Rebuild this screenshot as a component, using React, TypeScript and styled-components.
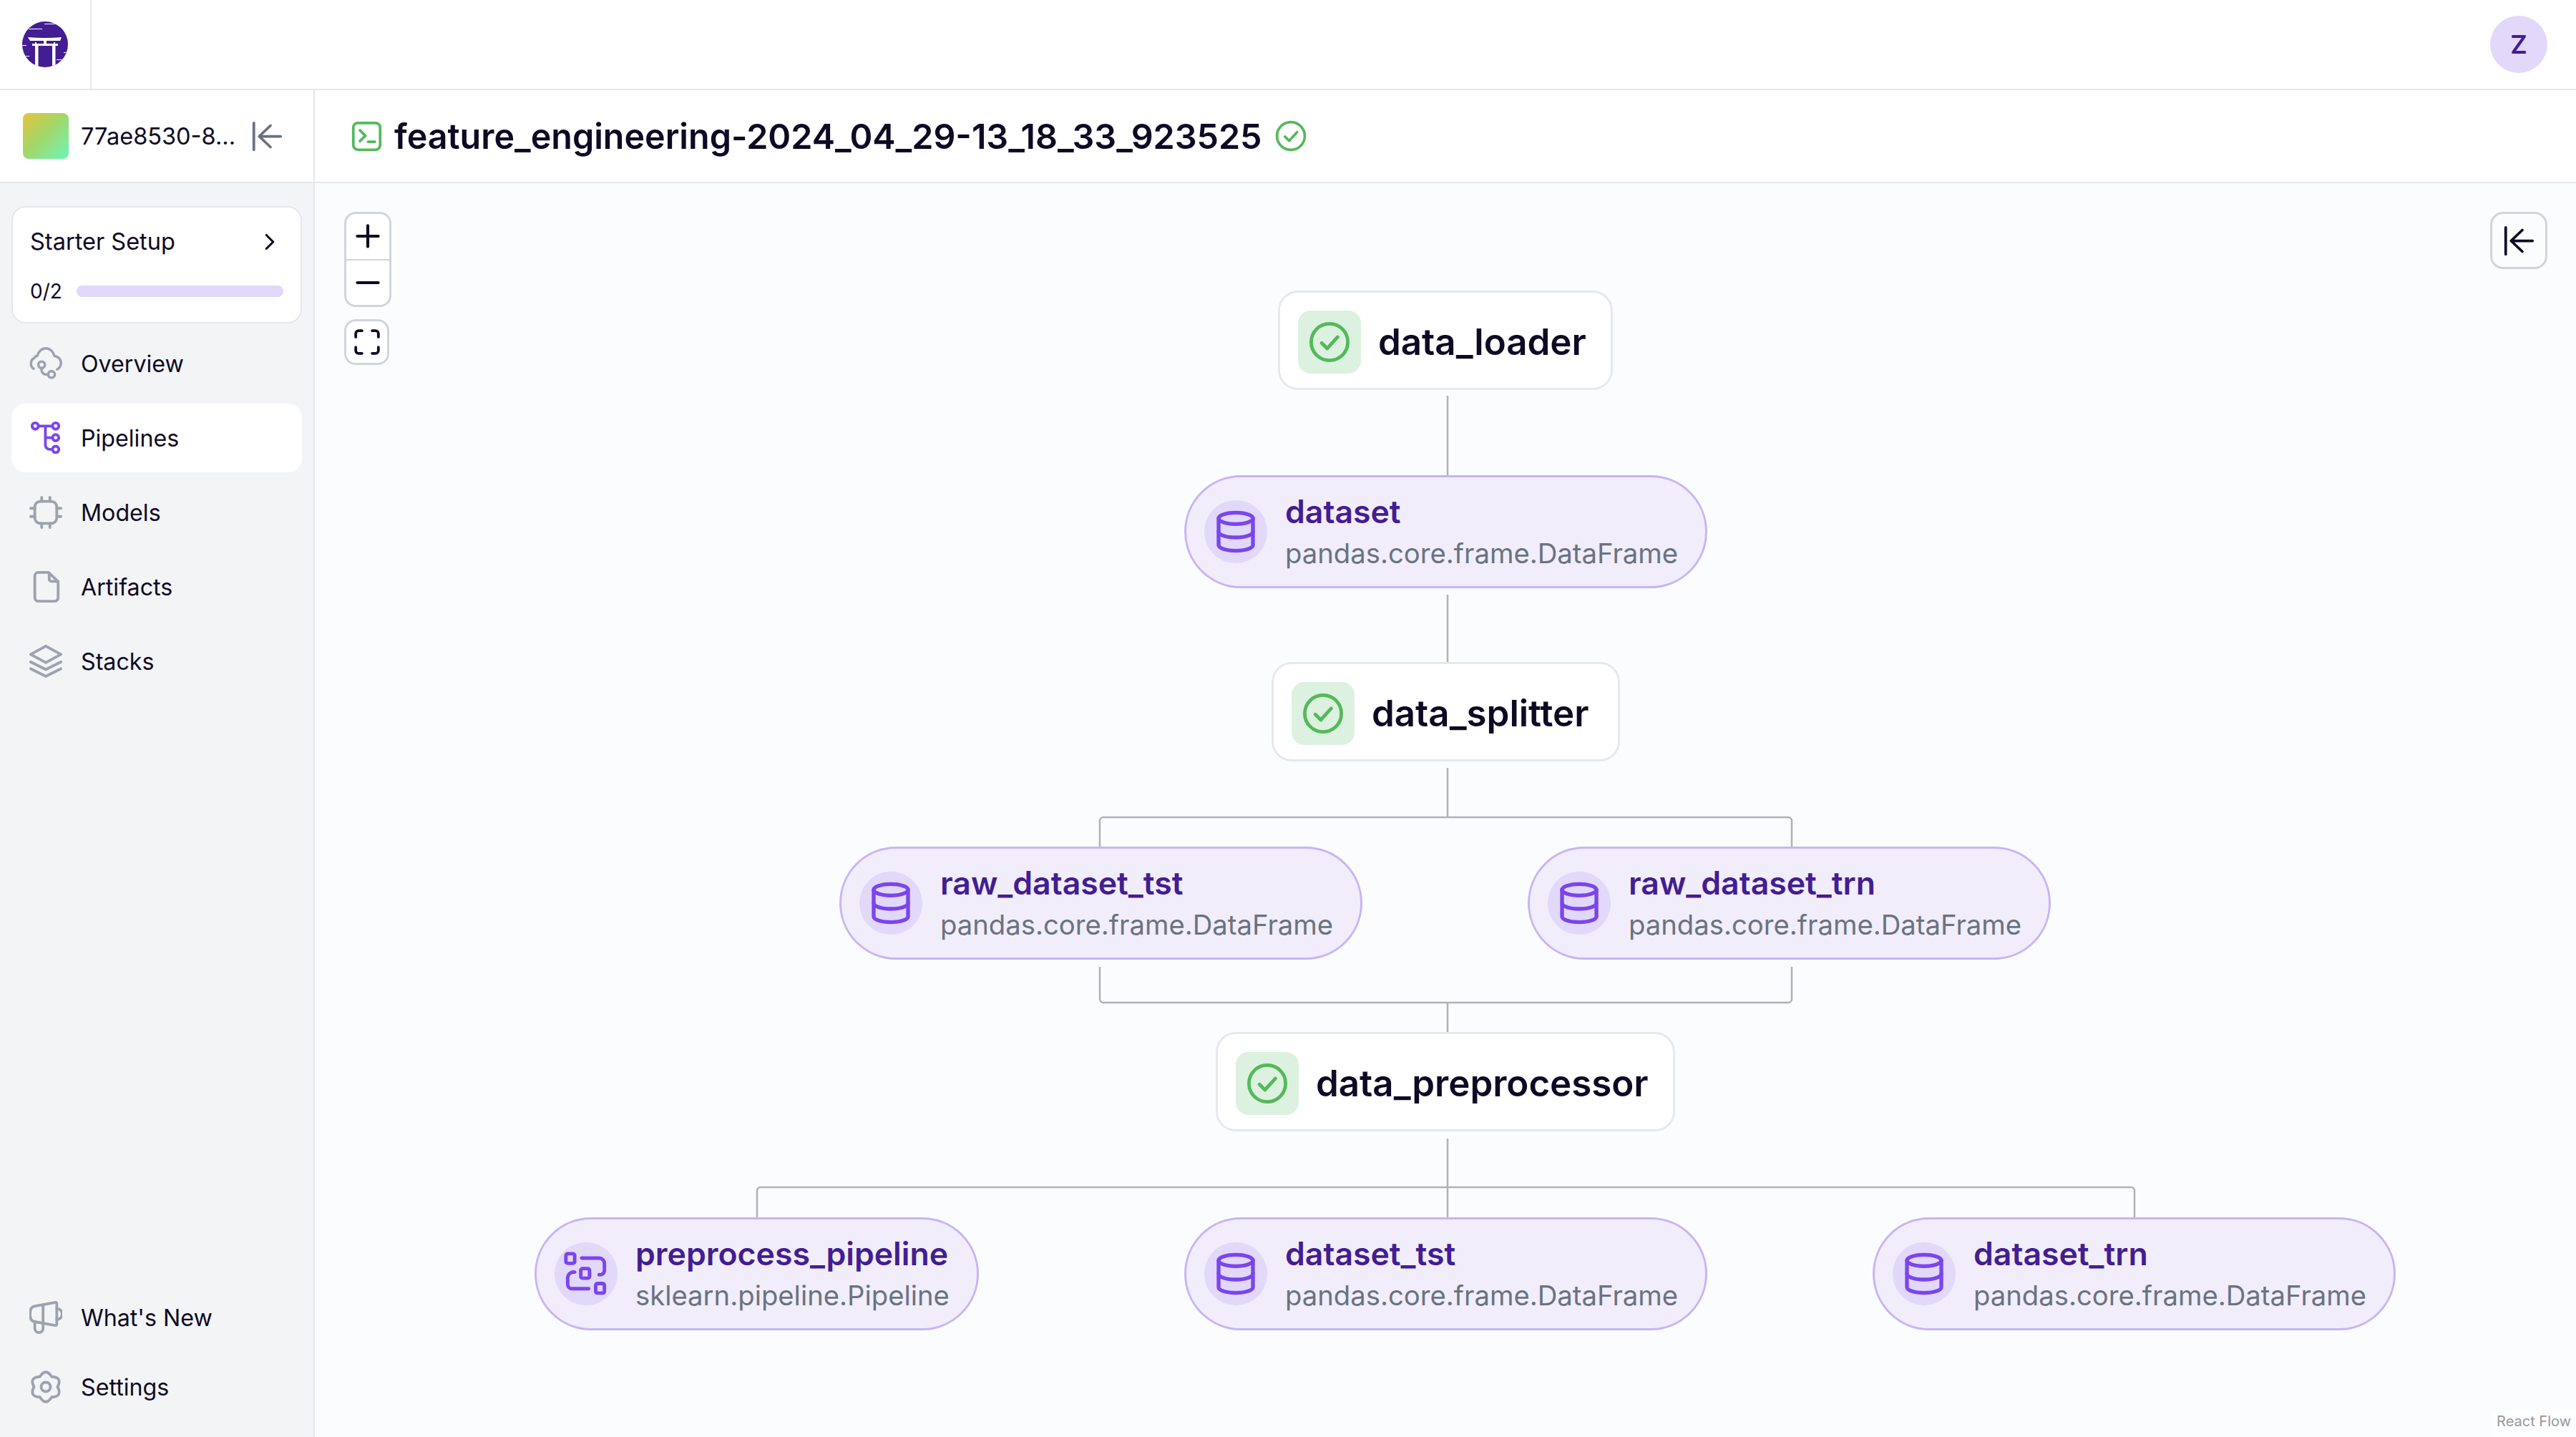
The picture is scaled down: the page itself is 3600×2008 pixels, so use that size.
import React from 'react';
import styled, { createGlobalStyle } from 'styled-components';
import { ChevronRight, Database, Plus, Minus } from 'lucide-react';

const GlobalStyle = createGlobalStyle`
  html, body {
    margin: 0;
    padding: 0;
    background: #fff;
  }
  body {
    font-family: Inter, "Noto Sans", sans-serif;
    color: #0e0a24;
  }
  * {
    box-sizing: border-box;
  }
`;

const Page = styled.div`
  width: 3600px;
  height: 2008px;
  display: flex;
  flex-direction: column;
  overflow: hidden;
`;

const TopBar = styled.header`
  height: 126px;
  flex: none;
  display: flex;
  align-items: center;
  justify-content: space-between;
  padding-right: 40px;
  border-bottom: 2px solid #e5e7eb;
`;

const LogoCell = styled.div`
  width: 128px;
  height: 124px;
  display: flex;
  align-items: center;
  padding-left: 31px;
  border-right: 2px solid #e5e7eb;
`;

const Avatar = styled.div`
  width: 80px;
  height: 80px;
  border-radius: 50%;
  background: #e1d8fa;
  color: #431d93;
  font-size: 36px;
  font-weight: 600;
  display: flex;
  align-items: center;
  justify-content: center;
`;

const Body = styled.div`
  flex: 1;
  display: flex;
  min-height: 0;
`;

const Sidebar = styled.aside`
  width: 440px;
  flex: none;
  display: flex;
  flex-direction: column;
  border-right: 2px solid #e5e7eb;
  background: #f3f4f6;
`;

const WorkspaceRow = styled.div`
  height: 130px;
  flex: none;
  display: flex;
  align-items: center;
  padding-left: 32px;
  background: #fff;
  border-bottom: 2px solid #e5e7eb;
`;

const WorkspaceSwatch = styled.div`
  width: 64px;
  height: 64px;
  border-radius: 8px;
  background: linear-gradient(135deg, #e9c23d 0%, #a3d766 45%, #6df6b8 100%);
`;

const WorkspaceName = styled.span`
  margin-left: 17px;
  margin-right: 24px;
  width: 214px;
  font-size: 32.5px;
  white-space: nowrap;
`;

const SideNav = styled.nav`
  flex: 1;
  display: flex;
  flex-direction: column;
  justify-content: space-between;
  padding: 32px 16px 22px;
`;

const NavGroup = styled.div<{ $gap: number }>`
  display: flex;
  flex-direction: column;
  gap: ${(p) => p.$gap}px;
`;

const SetupCard = styled.div`
  height: 164px;
  padding: 26px 24px 0 24px;
  background: #fff;
  border: 2px solid #e5e7eb;
  border-radius: 20px;
`;

const SetupTitle = styled.div`
  display: flex;
  align-items: center;
  justify-content: space-between;
  font-size: 32.5px;
  line-height: 44px;
`;

const SetupProgress = styled.div`
  display: flex;
  align-items: center;
  gap: 20px;
  margin-top: 30px;
  font-size: 28px;
`;

const ProgressBar = styled.div`
  flex: 1;
  height: 16px;
  border-radius: 8px;
  background: #e1d8fa;
`;

const NavItem = styled.div<{ $active?: boolean }>`
  height: 96px;
  display: flex;
  align-items: center;
  gap: 26px;
  padding-left: 25px;
  border-radius: 20px;
  font-size: 32.2px;
  background: ${(p) => (p.$active ? '#fff' : 'transparent')};
`;

const NavIcon = styled.svg<{ $active?: boolean }>`
  width: 46px;
  height: 46px;
  flex: none;
  fill: none;
  stroke: ${(p) => (p.$active ? '#7a45ed' : '#9ca3af')};
  stroke-width: 2;
  stroke-linecap: round;
  stroke-linejoin: round;
`;

const Main = styled.main`
  flex: 1;
  display: flex;
  flex-direction: column;
  min-width: 0;
`;

const RunHeader = styled.div`
  height: 130px;
  flex: none;
  display: flex;
  align-items: center;
  padding-left: 50px;
  border-bottom: 2px solid #e5e7eb;
`;

const RunTitle = styled.h1`
  margin: 0 18px 0 16px;
  font-size: 48.4px;
  font-weight: 600;
  white-space: nowrap;
`;

const LineIcon = styled.svg<{ $size: number; $color: string; $stroke?: number }>`
  width: ${(p) => p.$size}px;
  height: ${(p) => p.$size}px;
  flex: none;
  fill: none;
  stroke: ${(p) => p.$color};
  stroke-width: ${(p) => p.$stroke ?? 2};
  stroke-linecap: round;
  stroke-linejoin: round;
`;

const Canvas = styled.div`
  flex: 1;
  position: relative;
  background: #fbfcfe;
`;

const EdgeLayer = styled.svg`
  position: absolute;
  inset: 0;
  width: 100%;
  height: 100%;
  fill: none;
  stroke: #b1b1b7;
  stroke-width: 2.5;
`;

const ZoomControls = styled.div`
  position: absolute;
  left: 41px;
  top: 40px;
  width: 66px;
  height: 133px;
  display: flex;
  flex-direction: column;
  background: #fff;
  border: 3px solid #d1d5db;
  border-radius: 16px;
  overflow: hidden;
`;

const ZoomButton = styled.div`
  flex: 1;
  display: flex;
  align-items: center;
  justify-content: center;
  color: #0e0a24;

  & + & {
    border-top: 2px solid #d1d5db;
  }
`;

const FitButton = styled.div`
  position: absolute;
  left: 41px;
  top: 190px;
  width: 63px;
  height: 64px;
  display: flex;
  align-items: center;
  justify-content: center;
  background: #fff;
  border: 3px solid #d1d5db;
  border-radius: 16px;
`;

const CollapseButton = styled.div`
  position: absolute;
  right: 40px;
  top: 40px;
  width: 80px;
  height: 80px;
  display: flex;
  align-items: center;
  justify-content: center;
  border: 3px solid #d1d5db;
  border-radius: 18px;
`;

const StepNode = styled.div<{ $x: number; $y: number; $w: number }>`
  position: absolute;
  left: ${(p) => p.$x}px;
  top: ${(p) => p.$y}px;
  width: ${(p) => p.$w}px;
  height: 139px;
  display: flex;
  align-items: center;
  gap: 24px;
  padding: 4px 0 0 25px;
  background: #fff;
  border: 3px solid #e7e8ec;
  border-radius: 28px;
  font-size: 51px;
  font-weight: 600;
  white-space: nowrap;
`;

const StepStatus = styled.div`
  width: 88px;
  height: 88px;
  flex: none;
  display: flex;
  align-items: center;
  justify-content: center;
  border-radius: 18px;
  background: #dcf1e0;
`;

const ArtifactNode = styled.div<{ $x: number; $y: number; $w: number }>`
  position: absolute;
  left: ${(p) => p.$x}px;
  top: ${(p) => p.$y}px;
  width: ${(p) => p.$w}px;
  height: 158px;
  display: flex;
  align-items: center;
  gap: 25px;
  padding-left: 25px;
  background: #f1edfb;
  border: 3px solid #c7b5f5;
  border-radius: 79px;
  white-space: nowrap;
`;

const ArtifactIcon = styled.div`
  width: 88px;
  height: 88px;
  flex: none;
  display: flex;
  align-items: center;
  justify-content: center;
  border-radius: 50%;
  background: #e1d8fa;
  color: #7a45ed;
`;

const ArtifactText = styled.div`
  display: flex;
  flex-direction: column;
  gap: 7px;
`;

const ArtifactName = styled.div`
  font-size: 44.6px;
  line-height: 52px;
  font-weight: 600;
  color: #431d93;
`;

const ArtifactType = styled.div`
  font-size: 38.25px;
  line-height: 50px;
  color: #6b7280;
`;

const Attribution = styled.div`
  position: absolute;
  right: 0;
  bottom: 0;
  padding: 4px 7px 10px;
  font-size: 20px;
  color: #999;
  background: rgba(255, 255, 255, 0.5);
`;

const CollapseGlyph = ({ color }: { color: string }) => (
  <LineIcon $size={45} $color={color} viewBox="0 0 24 24">
    <path d="M2 2v20M14.4 4 6 12l8.4 8M6 12h16" />
  </LineIcon>
);

const CheckCircle = ({ size }: { size: number }) => (
  <LineIcon $size={size} $color="#54b95a" $stroke={2} viewBox="0 0 24 24">
    <circle cx="12" cy="12" r="10.6" />
    <path d="m7.5 12.5 3.2 3.2 6-6.6" />
  </LineIcon>
);

const PipelineGlyph = () => (
  <LineIcon $size={66} $color="#7a45ed" viewBox="0 0 27 27">
    <rect x="2" y="2" width="5" height="5.5" rx="1" />
    <rect x="10.5" y="10.5" width="5" height="5.5" rx="1" />
    <rect x="19" y="19" width="5" height="5.5" rx="1" />
    <path d="M11 4.5h10a3 3 0 0 1 3 3v4a2.5 2.5 0 0 1-3 2.5" />
    <path d="M7 12.5a3.5 3.5 0 0 0-4 3v4a2.5 2.5 0 0 0 2.5 2.5H15" />
  </LineIcon>
);

const gearPath = (() => {
  const at = (r: number, deg: number) => {
    const a = (deg * Math.PI) / 180;
    return `${(12 + r * Math.cos(a)).toFixed(2)} ${(12 + r * Math.sin(a)).toFixed(2)}`;
  };
  let d = `M${at(8.6, -120)}`;
  for (let i = 0; i < 6; i++) {
    d += ` Q${at(14.2, -90 + i * 60)} ${at(8.6, -60 + i * 60)}`;
  }
  return `${d}Z`;
})();

const steps = [
  { name: 'data_loader', x: 1346, y: 150, w: 468 },
  { name: 'data_splitter', x: 1337, y: 669, w: 487 },
  { name: 'data_preprocessor', x: 1259, y: 1186, w: 642 },
];

const artifacts = [
  { name: 'dataset', type: 'pandas.core.frame.DataFrame', x: 1215, y: 408, w: 731 },
  { name: 'raw_dataset_tst', type: 'pandas.core.frame.DataFrame', x: 733, y: 927, w: 731 },
  { name: 'raw_dataset_trn', type: 'pandas.core.frame.DataFrame', x: 1695, y: 927, w: 731 },
  { name: 'preprocess_pipeline', type: 'sklearn.pipeline.Pipeline', x: 307, y: 1445, w: 621, pipeline: true },
  { name: 'dataset_tst', type: 'pandas.core.frame.DataFrame', x: 1215, y: 1445, w: 731 },
  { name: 'dataset_trn', type: 'pandas.core.frame.DataFrame', x: 2177, y: 1445, w: 731 },
];

const edges = [
  'M1583 297V408',
  'M1583 575V669',
  'M1583 817V886',
  'M1583 886H1102a5 5 0 0 0-5 5V927',
  'M1583 886H2059a5 5 0 0 1 5 5V927',
  'M1097 1095V1140a5 5 0 0 0 5 5H2059a5 5 0 0 0 5-5V1095',
  'M1583 1145V1186',
  'M1583 1335V1403',
  'M1583 1403H623a5 5 0 0 0-5 5V1445',
  'M1583 1403H2538a5 5 0 0 1 5 5V1445',
  'M1583 1403V1445',
];

export default function App(): React.ReactElement {
  return (
    <Page>
      <GlobalStyle />
      <TopBar>
        <LogoCell>
          <svg width="64" height="64" viewBox="0 0 64 64">
            <defs>
              <clipPath id="logo-disc">
                <circle cx="32" cy="32" r="32" />
              </clipPath>
            </defs>
            <circle cx="32" cy="32" r="32" fill="#431d93" />
            <g clipPath="url(#logo-disc)" fill="#fff">
              <path d="M8 22q24 2 47 0l-2 5H11z" />
              <rect x="14" y="31" width="36" height="3" />
              <rect x="30" y="26" width="4" height="6" />
              <rect x="18" y="29" width="2" height="3" />
              <rect x="44" y="29" width="2" height="3" />
              <rect x="18" y="34" width="4.5" height="30" />
              <rect x="42" y="34" width="4.5" height="30" />
              <rect x="9" y="10" width="19" height="1" />
              <rect x="31" y="3" width="20" height="1" />
              <rect x="0" y="33" width="6" height="1" />
              <rect x="0" y="48" width="10" height="1" />
              <rect x="58" y="43" width="6" height="1" />
              <rect x="48" y="53" width="12" height="1" />
            </g>
          </svg>
        </LogoCell>
        <Avatar>Z</Avatar>
      </TopBar>
      <Body>
        <Sidebar>
          <WorkspaceRow>
            <WorkspaceSwatch />
            <WorkspaceName>77ae8530-8...</WorkspaceName>
            <CollapseGlyph color="#6b7280" />
          </WorkspaceRow>
          <SideNav>
            <NavGroup $gap={8}>
              <SetupCard>
                <SetupTitle>
                  Starter Setup
                  <ChevronRight size={38} strokeWidth={2} color="#0e0a24" />
                </SetupTitle>
                <SetupProgress>
                  0/2
                  <ProgressBar />
                </SetupProgress>
              </SetupCard>
              <NavItem>
                <NavIcon viewBox="-1 -1 26 26">
                  <path d="M2.4 16C-.5 14.5-.5 9 3 7.5 3.5 6.6 4.3 6 5.3 5.9 6 2.5 8.8 0 12 0s6 2.5 6.7 5.9c3 .4 5.3 2.8 5.3 5.5 0 2.2-1.2 4.2-3 5.2" />
                  <circle cx="8.7" cy="13" r="2.6" />
                  <circle cx="16.5" cy="20.6" r="2.6" />
                  <path d="M8.7 15.6v1.6a3.4 3.4 0 0 0 3.4 3.4h1.8" />
                </NavIcon>
                Overview
              </NavItem>
              <NavItem $active>
                <NavIcon $active viewBox="0 0 24 24">
                  <circle cx="4.3" cy="3.3" r="2.3" />
                  <circle cx="19.2" cy="3.3" r="2.3" />
                  <circle cx="19.2" cy="11.8" r="2.3" />
                  <circle cx="19.2" cy="20.3" r="2.3" />
                  <path d="M6.6 3.3h10.3M11.7 3.3v13.8a3.2 3.2 0 0 0 3.2 3.2h2M11.7 11.8h5.2" />
                </NavIcon>
                Pipelines
              </NavItem>
              <NavItem>
                <NavIcon viewBox="0 0 24 24">
                  <rect x="4" y="4" width="16" height="16" rx="4" />
                  <path d="M9 1v3M15 1v3M9 20v3M15 20v3M1 9h3M1 15h3M20 9h3M20 15h3" />
                </NavIcon>
                Models
              </NavItem>
              <NavItem>
                <NavIcon viewBox="0 0 24 24">
                  <path d="M6.5 1.5h7.5L21 8.2V20a2.5 2.5 0 0 1-2.500 2.500h-12A2.500 2.500 0 0 1 4 20V4a2.500 2.500 0 0 1 2.500-2.500z" />
                  <path d="M14.500 2v4.500a1.500 1.500 0 0 0 1.500 1.500h4.500" />
                </NavIcon>
                Artifacts
              </NavItem>
              <NavItem>
                <NavIcon viewBox="0 0 24 24">
                  <path d="M12 1 23 7l-11 6L1 7z" />
                  <path d="m1 12.500 11 5.500 11-5.500" />
                  <path d="m1 17.500 11 5.500 11-5.500" />
                </NavIcon>
                Stacks
              </NavItem>
            </NavGroup>
            <NavGroup $gap={1}>
              <NavItem>
                <NavIcon viewBox="0 0 24 24">
                  <path d="M19 1 3.500 3.800C1.500 4.200.5 6.500.5 9.600s1 5 3 5.400L19 17.800c.6.100 1-.3 1-.8V1.800c0-.5-.4-.9-1-.8z" />
                  <path d="M10 3v12.300" />
                  <path d="M4 15v5a3 3 0 0 0 6 0v-4.500" />
                  <path d="M20 5.500a4 4 0 0 1 0 8" />
                </NavIcon>
                What's New
              </NavItem>
              <NavItem>
                <NavIcon viewBox="0 0 24 24">
                  <path d={gearPath} />
                  <circle cx="12" cy="12" r="3.400" />
                </NavIcon>
                Settings
              </NavItem>
            </NavGroup>
          </SideNav>
        </Sidebar>
        <Main>
          <RunHeader>
            <LineIcon $size={45} $color="#54b95a" viewBox="0 0 24 24">
              <rect x="2" y="2" width="20" height="20" rx="3.500" />
              <path d="m7 7.500 4 4-4 4M13 16h5" />
            </LineIcon>
            <RunTitle>feature_engineering-2024_04_29-13_18_33_923525</RunTitle>
            <CheckCircle size={44} />
          </RunHeader>
          <Canvas>
            <EdgeLayer>
              {edges.map((d) => (
                <path key={d} d={d} />
              ))}
            </EdgeLayer>
            <ZoomControls>
              <ZoomButton>
                <Plus size={50} strokeWidth={2} />
              </ZoomButton>
              <ZoomButton>
                <Minus size={50} strokeWidth={2} />
              </ZoomButton>
            </ZoomControls>
            <FitButton>
              <LineIcon $size={38} $color="#0e0a24" $stroke={2.4} viewBox="0 0 24 24">
                <path d="M7.500 2H4.500A2.500 2.500 0 0 0 2 4.500v3M16.500 2h3A2.500 2.500 0 0 1 22 4.500v3M7.500 22H4.500A2.500 2.500 0 0 1 2 19.500v-3M16.500 22h3a2.500 2.500 0 0 0 2.500-2.500v-3" />
              </LineIcon>
            </FitButton>
            <CollapseButton>
              <CollapseGlyph color="#0e0a24" />
            </CollapseButton>
            {steps.map((s) => (
              <StepNode key={s.name} $x={s.x} $y={s.y} $w={s.w}>
                <StepStatus>
                  <CheckCircle size={58} />
                </StepStatus>
                {s.name}
              </StepNode>
            ))}
            {artifacts.map((a) => (
              <ArtifactNode key={a.name} $x={a.x} $y={a.y} $w={a.w}>
                <ArtifactIcon>{a.pipeline ? <PipelineGlyph /> : <Database size={64} strokeWidth={2} />}</ArtifactIcon>
                <ArtifactText>
                  <ArtifactName>{a.name}</ArtifactName>
                  <ArtifactType>{a.type}</ArtifactType>
                </ArtifactText>
              </ArtifactNode>
            ))}
            <Attribution>React Flow</Attribution>
          </Canvas>
        </Main>
      </Body>
    </Page>
  );
}
